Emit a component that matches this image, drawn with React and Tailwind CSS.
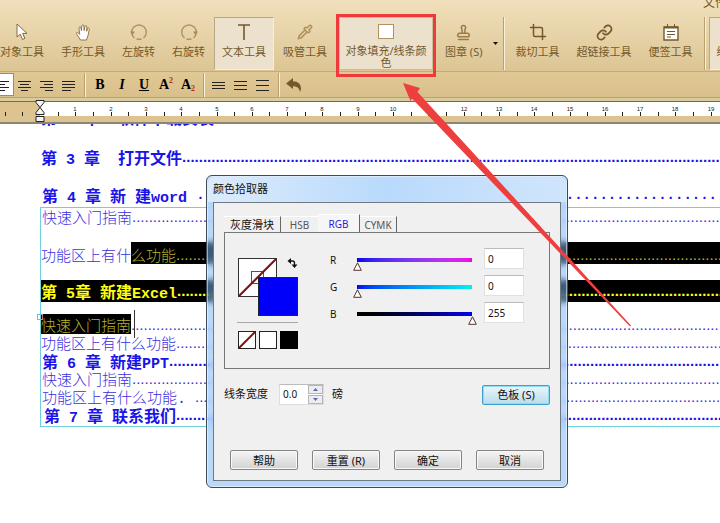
import { useState } from "react";
import { Crop, Link, Pipette, Stamp } from "lucide-react";

const DOTS = ".".repeat(165);

// Table of contents rows, "sel" is the highlighted part
const introRows = [
    { text: "快速入门指南", pad: "pl-px" },
    { text: "功能区上有什", sel: "么功能", selRest: true, height: "h-[22px] mt-4 leading-[26px]" },
    { sel: "第 5章 新建Excel", bold: true, selRest: true, height: "h-[22px] mt-4 leading-[22px]" },
];

const endRows = [
    { text: "功能区上有什么功能" },
    { text: "第 6 章 新建PPT", bold: true, pad: "pl-px" },
    { text: "快速入门指南", pad: "pl-px" },
    { text: "功能区上有什么功能. ", pad: "pl-px" },
    { text: "第 7 章 联系我们", bold: true, pad: "pl-[3px]" },
];

function Tool({ icon, label, active, className = "" }) {
    return (
        <button
            type="button"
            className={`relative flex h-[53px] shrink-0 flex-col items-center border px-[7px] pt-1.5 text-[11px] leading-[12px] text-[#75592b] ${
                active ? "border-[#b6a987] border-r-[#f7eedb] border-b-[#f7eedb] bg-[#ebe1cd]" : "border-transparent"
            } ${className}`}
        >
            <span className="flex h-4 w-full items-center justify-center">{icon}</span>
            <span className="mt-[6px] whitespace-nowrap">{label}</span>
        </button>
    );
}

function Divider({ className = "" }) {
    return <div className={`w-0.5 shrink-0 border-l border-[#b7a172] bg-[#faf1dc] ${className}`} />;
}

function FormatButton({ label, active, children }) {
    return (
        <button
            type="button"
            aria-label={label}
            className={`flex h-[23px] w-[22px] shrink-0 items-center justify-center font-['Liberation_Serif',serif] text-[14px] leading-none font-bold text-black ${
                active ? "border border-[#a08c61] bg-white" : ""
            }`}
        >
            {children}
        </button>
    );
}

function Lines({ widths, align = "left", gap = 3 }) {
    return (
        <svg width="14" height="14" viewBox="0 0 14 14" shapeRendering="crispEdges">
            {widths.map((w, i) => {
                const x = align === "left" ? 0 : align === "right" ? 13 - w : (13 - w) / 2;
                const top = Math.round(7 - ((widths.length - 1) * gap) / 2);
                return <rect key={i} x={x} y={top + i * gap} width={w} height="1" fill="#222" />;
            })}
        </svg>
    );
}

function Ruler() {
    const origin = 40;
    const unit = 35.3;
    const halves = Array.from({ length: 42 }, (_, i) => i - 2).filter((n) => n !== 0);
    return (
        <svg className="block h-[14px] w-full" shapeRendering="crispEdges">
            <rect x="0" y="0" width="40" height="14" fill="#dcc38f" />
            {halves.map((n) => {
                const x = Math.round(origin + (n * unit) / 2);
                const whole = n > 0 && n % 2 === 0;
                return (
                    <g key={n}>
                        <rect x={x} y={10} width="1" height="4" fill="#222" />
                        {whole && (
                            <text x={x} y="9" textAnchor="middle" className="font-['Liberation_Sans',sans-serif] text-[6px]" fill="#222">
                                {n / 2}
                            </text>
                        )}
                    </g>
                );
            })}
        </svg>
    );
}

// Latin runs use the monospace face, Chinese runs the page font
function Mixed({ text, bold }) {
    return text.split(/([\x20-\x7e]+)/).filter(Boolean).map((part, i) => {
        const latin = /^[\x20-\x7e]+$/.test(part);
        return (
            <span key={i} className={latin ? "font-['Liberation_Mono',monospace] text-[15px]" : bold ? "text-[16px]" : "text-[15px]"}>
                {part}
            </span>
        );
    });
}

function TocRow({ text, sel, selRest, bold, wide, pad = "", height = "h-[18px]" }) {
    const dots = wide
        ? "font-['Liberation_Mono',monospace] text-[14px] font-bold"
        : bold
            ? "font-['Liberation_Sans',sans-serif] text-[15px] font-bold"
            : "font-['Liberation_Sans',sans-serif] text-[15px]";
    const black = bold ? "bg-black text-[#ffff14]" : "bg-black text-[#b5b52c]";
    return (
        <div className={`flex items-stretch overflow-hidden whitespace-pre ${height} ${pad} ${bold ? "font-bold text-[#1a14e6]" : "font-light text-[#3a30dd]"}`}>
            {text && <span className="flex shrink-0 items-baseline"><Mixed text={text} bold={bold} /></span>}
            {sel && <span className={`flex shrink-0 items-baseline ${black}`}><Mixed text={sel} bold={bold} /></span>}
            <span className={`min-w-0 flex-1 overflow-hidden ${dots} ${selRest ? black : ""}`}>{DOTS}</span>
        </div>
    );
}

function Channel({ name, track, value, onChange }) {
    return (
        <div className="flex h-[27px] items-start">
            <label htmlFor={`slider-${name}`} className="mt-[5px] w-[27px] leading-[14px]">{name}</label>
            <div className="relative mt-[10px] h-[14px] w-[115px]">
                <div className={`h-1 w-full ${track}`} />
                <svg
                    className="absolute top-1 -ml-1 h-[9px] w-[9px]"
                    style={{ left: `${(value / 255) * 100}%` }}
                    viewBox="0 0 9 9"
                >
                    <path d="M4.5 .8 8.3 8.3H.7Z" fill="#fff" stroke="#54332c" />
                </svg>
                <input
                    id={`slider-${name}`}
                    type="range"
                    min="0"
                    max="255"
                    value={value}
                    onChange={(e) => onChange(Number(e.target.value))}
                    className="absolute inset-0 m-0 h-full w-full opacity-0"
                />
            </div>
            <input
                type="text"
                aria-label={`${name} 值`}
                value={value}
                onChange={(e) => onChange(Number(e.target.value) || 0)}
                className="ml-3 h-[21px] w-10 border border-[#e0e0e0] border-t-[#bbb] bg-white px-[3px] text-[10px] leading-none"
            />
        </div>
    );
}

function DialogButton({ children, primary }) {
    return (
        <button
            type="button"
            className={`h-5 w-[68px] rounded-[2px] border text-[11px] leading-none whitespace-nowrap ${
                primary
                    ? "border-[#3aa0cc] bg-linear-to-b from-[#eaf6fc] to-[#b9dcea] shadow-[inset_0_0_0_1px_#8fdcf5]"
                    : "border-[#858585] bg-linear-to-b from-[#f5f5f5] to-[#d2d2d2] shadow-[inset_0_0_0_1px_#f8f8f8]"
            }`}
        >
            {children}
        </button>
    );
}

function Swatches() {
    return (
        <svg width="62" height="94" viewBox="0 0 62 94">
            {/* stroke and fill */}
            <rect x="1.5" y="1.5" width="38" height="38" fill="#fff" stroke="#333" />
            <rect x="14.5" y="14.5" width="12" height="12" fill="none" stroke="#555" />
            <path d="M2 39 39 2" stroke="#7a1414" strokeWidth="2.2" />
            <rect x="21.5" y="20.5" width="39" height="38" fill="#0000fa" stroke="#22223a" />
            {/* swap */}
            <path d="M53 4h2.500q2 0 2 2V8" fill="none" stroke="#111" strokeWidth="1.300" />
            <path d="M50.500 4 54 1v6ZM54.500 7.500h6L57.500 11Z" fill="#111" />
            <path d="M0 65.500h61" stroke="#a8a8a8" />
            {/* presets */}
            <rect x="1.500" y="74.500" width="17" height="17" fill="#fff" stroke="#222" />
            <path d="M2 91 18 75" stroke="#7a1414" strokeWidth="2" />
            <rect x="22.500" y="74.500" width="17" height="17" fill="#fff" stroke="#222" />
            <rect x="43" y="74" width="18" height="18" fill="#000" />
        </svg>
    );
}

function ColorPicker() {
    const [rgb, setRgb] = useState({ R: 0, G: 0, B: 255 });
    const [lineWidth, setLineWidth] = useState("0.0");
    const set = (key) => (value) => setRgb({ ...rgb, [key]: value });
    const step = (d) => setLineWidth(Math.max(0, Number(lineWidth) + d).toFixed(1));

    return (
        <div
            role="dialog"
            aria-label="颜色拾取器"
            className="absolute top-[175px] left-[206px] w-[362px] rounded-md border border-[#3f4a58] bg-[#73b3f7]/50 px-1.5 pb-1.5 text-[11px] text-[#111] shadow-[inset_0_0_0_1px_rgba(255,255,255,0.5)] backdrop-blur-[3px]"
        >
            <div className="absolute inset-x-px top-px h-[25px] rounded-t-md bg-linear-to-r from-[#dcebfb] via-[#b9dafc] to-[#d0e5fc]" />
            <h2 className="relative h-[26px] leading-[26px]">颜色拾取器</h2>

            <div className="relative border border-[#6f7883] bg-[#f0f0f0] px-[10px] pt-[11px] pb-[10px]">
                {/* tabs */}
                <div role="tablist" className="flex h-[18px] items-end leading-none">
                    <button role="tab" aria-selected="false" className="h-4 w-[57px] border-t border-r border-t-white border-r-[#666] whitespace-nowrap">灰度滑块</button>
                    <button role="tab" aria-selected="false" className="h-4 w-[37px] border-t border-t-white text-[10px] text-[#555]">HSB</button>
                    <button role="tab" aria-selected="true" className="h-[18px] w-[42px] border-t border-r border-t-white border-r-[#666] bg-[#f6f6f6] text-[10px] text-[#2b22dd]">RGB</button>
                    <button role="tab" aria-selected="false" className="h-4 w-[37px] border-t border-r border-t-white border-r-[#666] text-[10px] text-[#555]">CYMK</button>
                </div>
                <div role="tabpanel" className="flex h-[137px] border border-[#777] pt-[15px] pl-3 text-[10px]">
                    <div className="mt-[9px] shrink-0"><Swatches /></div>
                    <div className="ml-[31px]">
                        <Channel name="R" value={rgb.R} onChange={set("R")} track="bg-linear-to-r from-[#0000f0] to-[#f000e6]" />
                        <Channel name="G" value={rgb.G} onChange={set("G")} track="bg-linear-to-r from-[#0000f0] to-[#00f0f0]" />
                        <Channel name="B" value={rgb.B} onChange={set("B")} track="bg-linear-to-r from-black to-[#0000f0]" />
                    </div>
                </div>

                {/* line width */}
                <div className="mt-[15px] flex h-[21px] items-center">
                    <label htmlFor="line-width" className="w-[55px]">线条宽度</label>
                    <div className="flex h-[21px] w-[45px] border border-[#ddd] border-t-[#bbb] bg-white">
                        <input
                            id="line-width"
                            type="text"
                            value={lineWidth}
                            onChange={(e) => setLineWidth(e.target.value)}
                            className="w-[28px] pl-[3px] text-[10px]"
                        />
                        <div className="flex flex-1 flex-col gap-px">
                            <button type="button" aria-label="增加" onClick={() => step(0.5)} className="flex flex-1 items-center justify-center border border-[#b5b5b5] bg-[#ececf2]">
                                <svg width="5" height="3"><path d="M0 3 2.500 0 5 3Z" fill="#5a6aa0" /></svg>
                            </button>
                            <button type="button" aria-label="减少" onClick={() => step(-0.5)} className="flex flex-1 items-center justify-center border border-[#b5b5b5] bg-[#ececf2]">
                                <svg width="5" height="3"><path d="M0 0h5L2.500 3Z" fill="#5a6aa0" /></svg>
                            </button>
                        </div>
                    </div>
                    <span className="ml-2 flex-1">磅</span>
                    <DialogButton primary>色板 (S)</DialogButton>
                </div>

                <div className="mt-[45px] flex justify-center gap-[14px]">
                    <DialogButton>帮助</DialogButton>
                    <DialogButton>重置 (R)</DialogButton>
                    <DialogButton>确定</DialogButton>
                    <DialogButton>取消</DialogButton>
                </div>
            </div>
        </div>
    );
}

function Toolbar() {
    return (
        <header className="bg-linear-to-b from-[#f1e0bc] to-[#dcc593] text-[#75592b]">
            <div className="flex h-[17px] justify-end">
                <a href="#file" className="h-[9px] w-[17px] overflow-hidden text-[12px] leading-[6px] whitespace-nowrap">文件</a>
            </div>
            <div className="-ml-2 flex h-[54px] items-start gap-px">
                <Tool
                    label="对象工具"
                    icon={<svg width="14" height="18" viewBox="0 0 14 18"><path d="M2 1v13l3.200-2.800L7.500 16.500l2.400-1.100-2.300-5H12Z" fill="#fff" stroke="#8a6a3a" /></svg>}
                />
                <Tool
                    label="手形工具"
                    icon={
                        <svg width="16" height="17" viewBox="0 0 16 17">
                            <path d="M5.500 16 2 10.500C.8 8.600 2 7.800 3.200 8.900L4.700 10.400 4 4.200C3.900 2.500 5.700 2.400 6 4l.4 2.500L6.800 2c.1-1.500 2-1.500 2.100 0l.2 4.500L9.900 2.600c.3-1.400 2.100-1.100 2 .4l-.3 4.300 1-2.600c.5-1.200 2-.7 1.700.6L13 11.500 11.500 16Z" fill="#fff" stroke="#8a6a3a" strokeWidth=".9" />
                        </svg>
                    }
                />
                <Tool
                    label="左旋转"
                    icon={
                        <svg width="18" height="18" viewBox="0 0 18 18" fill="none">
                            <path d="M4.500 15A7.300 7.300 0 1 1 13.500 15M6.500 16.300h5" stroke="#b0935f" strokeWidth="1.400" />
                            <path d="M0 8.500h5L2.500 12Z" fill="#a88954" />
                        </svg>
                    }
                />
                <Tool
                    label="右旋转"
                    icon={
                        <svg width="18" height="18" viewBox="0 0 18 18" fill="none">
                            <path d="M4.500 15A7.300 7.300 0 1 1 13.500 15M6.500 16.300h5" stroke="#b0935f" strokeWidth="1.400" />
                            <path d="M13 8.500h5L15.500 12Z" fill="#a88954" />
                        </svg>
                    }
                />
                <Tool
                    active
                    label="文本工具"
                    icon={<svg width="14" height="16" viewBox="0 0 14 16"><path d="M1 1h12M7 1v15" stroke="#75592b" strokeWidth="1.600" /></svg>}
                />
                <Tool label="吸管工具" icon={<Pipette size={16} color="#b0935f" strokeWidth={2.4} />} />
                <button
                    type="button"
                    className="relative mx-[3px] flex h-[53px] w-[94px] shrink-0 flex-col items-center border border-[#c9bd9e] bg-[#ebe1cd] pt-1.5 text-[11px] leading-[12px]"
                >
                    <span className="size-4 border border-[#b0935f] bg-white" />
                    <span className="mt-[6px] w-[83px] text-center break-all">对象填充/线条颜色</span>
                    <span className="absolute -inset-x-1 -top-1 -bottom-2 border-[3px] border-[#ee3a3a]" />
                </button>
                <Tool label="图章 (S)" icon={<Stamp size={17} color="#9c7d48" strokeWidth={2.200} />} />
                <button type="button" aria-label="更多图章" className="flex h-[53px] w-2 shrink-0 items-center justify-center">
                    <svg width="5" height="3"><path d="M0 0h5L2.500 3Z" fill="#111" /></svg>
                </button>
                <Divider className="mr-0.5 ml-0.5 h-[53px]" />
                <Tool label="裁切工具" icon={<Crop size={18} color="#75592b" strokeWidth={2} />} />
                <Tool label="超链接工具" icon={<Link size={17} color="#75592b" strokeWidth={2.400} />} />
                <Tool
                    label="便签工具"
                    icon={
                        <svg width="16" height="17" viewBox="0 0 16 17">
                            <path d="M1 3h14v13H1Z" fill="#fff" stroke="#75592b" strokeWidth="1.400" />
                            <path d="M1 3.500h14" stroke="#75592b" strokeWidth="2" />
                            <path d="M4.500 0v4M11.500 0v4M4 7.500h8M4 10.500h8M4 13h4" stroke="#75592b" />
                        </svg>
                    }
                />
                <Divider className="mr-0.5 ml-0.5 h-[53px]" />
                <Tool active label="编辑工具" />
            </div>
        </header>
    );
}

function FormatBar() {
    return (
        <div className="-ml-2 flex h-[26px] items-center border-t border-[#c2ac7a] bg-linear-to-b from-[#e0c996] to-[#d9bf8a]">
            <FormatButton label="左对齐" active><Lines widths={[13, 9, 13, 9]} /></FormatButton>
            <FormatButton label="居中"><Lines widths={[13, 9, 13, 7]} align="center" /></FormatButton>
            <FormatButton label="右对齐"><Lines widths={[13, 9, 13, 8]} align="right" /></FormatButton>
            <FormatButton label="两端对齐"><Lines widths={[13, 13, 13, 9]} /></FormatButton>
            <Divider className="mr-[3px] ml-1 h-6" />
            <FormatButton label="粗体">B</FormatButton>
            <FormatButton label="斜体"><i>I</i></FormatButton>
            <FormatButton label="下划线"><u>U</u></FormatButton>
            <FormatButton label="上标">A<sup className="-top-1 text-[8px] text-[#b03018]">2</sup></FormatButton>
            <FormatButton label="下标">A<sub className="-bottom-1 text-[8px] text-[#b03018]">2</sub></FormatButton>
            <Divider className="mr-[3px] ml-1 h-6" />
            <FormatButton label="单倍行距"><Lines widths={[13, 13, 13]} /></FormatButton>
            <FormatButton label="1.5 倍行距"><Lines widths={[13, 13, 13]} gap={4} /></FormatButton>
            <FormatButton label="双倍行距"><Lines widths={[13, 13, 13]} gap={5} /></FormatButton>
            <Divider className="mr-[3px] ml-1 h-6" />
            <FormatButton label="撤销">
                <svg width="16" height="14" viewBox="0 0 16 14">
                    <path d="M0 5.500 7 0v3.200c5 0 8 3 8 7.300 0 1.400-.5 2.500-1 3.500C13.500 10.500 11.500 8.200 7 8.200V11Z" fill="#75592b" />
                </svg>
            </FormatButton>
        </div>
    );
}

export default function App() {
    return (
        <div className="relative min-h-screen overflow-hidden bg-white font-['Noto_Sans','Noto_Sans_CJK_SC',sans-serif]">
            <Toolbar />
            <FormatBar />
            <div className="relative border-b-2 border-[#8c8676] bg-[#dcc38f]">
                <div className="h-[5px] border-t border-b border-t-[#b5a27a] border-b-[#6d6a60] bg-[#d8cb9c]" />
                <div className="bg-white"><Ruler /></div>
                <div className="h-[6px]" />
                {/* indent markers */}
                <svg className="absolute top-[3px] left-[35px]" width="10" height="23" viewBox="0 0 10 23">
                    <path d="M1 .5h8v2L5 7.500 1 2.500ZM5 7.500l4 5v2H1v-2ZM1 16.500h8v5H1Z" fill="#f4f4f4" stroke="#222" />
                </svg>
            </div>

            <main className="font-['Noto_Sans_CJK_SC',sans-serif] leading-[18px]">
                <div className="pl-[41px]">
                    <div className="flex h-[6px] items-end overflow-hidden font-bold whitespace-pre text-[#1a14e6]">
                        <span><Mixed bold text="第 2 章  软件下载安装" /></span>
                    </div>
                    <div className="mt-[18px]"><TocRow bold text="第 3 章  打开文件" /></div>
                    <div className="mt-5"><TocRow bold wide pad="pl-px" text="第 4 章 新 建word " /></div>
                </div>
                <div className="mt-[3px] ml-10 border border-r-0 border-[#6fd0dd] pb-0.5">
                    {introRows.map((row, i) => <TocRow key={i} {...row} />)}
                    <div className="relative mt-3">
                        <TocRow sel="快速入门指南" height="h-5 leading-[21px]" />
                        {/* caret and anchor of the selection */}
                        <span className="absolute -top-1 left-[93px] h-7 w-px bg-[#333]" />
                        <span className="absolute top-0 -left-1 size-1.5 border border-[#5cc7d4] border-r-[#d86a6a]" />
                    </div>
                    {endRows.map((row, i) => <TocRow key={i} {...row} />)}
                </div>
            </main>

            <ColorPicker />

            {/* callout arrow */}
            <svg className="pointer-events-none absolute top-20 left-[400px]" width="240" height="250" viewBox="0 0 240 250">
                <path d="M3 3 20 8 17.500 12 231 245.500 230 246.500 12 18.500 10.500 21Z" fill="#ee3f3f" />
            </svg>
        </div>
    );
}
